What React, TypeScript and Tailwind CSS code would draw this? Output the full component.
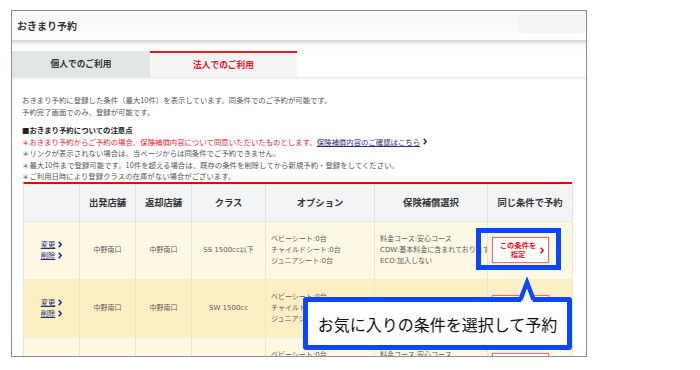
import React from "react";

const Chevron = ({ color = "#1f2a7a", w = 4, h = 7, sw = 1.4 }: { color?: string; w?: number; h?: number; sw?: number }) => (
  <svg width={w} height={h} viewBox={`0 0 ${w} ${h}`} className="inline-block">
    <polyline points={`0.7,0.7 ${w - 0.8},${h / 2} 0.7,${h - 0.7}`} fill="none" stroke={color} strokeWidth={sw} />
  </svg>
);

const LinkCell = () => (
  <div className="flex flex-col items-center justify-center text-[7.3px] leading-[11px] text-[#26307a]">
    <div className="flex items-center gap-[3px]">
      <span className="underline">変更</span>
      <Chevron />
    </div>
    <div className="flex items-center gap-[3px]">
      <span className="underline">削除</span>
      <Chevron />
    </div>
  </div>
);

const Button = () => (
  <div className="w-[57px] h-[26px] bg-white border border-[#ec6d6d] shadow-[0_0_0_1px_#fbe2e2] flex items-center pl-[3px] pr-[4px]">
    <div className="flex-1 text-center text-[7.3px] leading-[9.5px] font-bold text-[#e3141c] font-['Noto_Sans_CJK_JP',sans-serif]">
      <div>この条件を</div>
      <div>指定</div>
    </div>
    <Chevron color="#e3141c" w={4} h={7} sw={1.5} />
  </div>
);

type Row = { cls: string; bg: string; ins: string[] };

const rows: Row[] = [
  { cls: "SS 1500cc以下", bg: "bg-[#fdf8e4]", ins: ["料金コース:安心コース", "CDW:基本料金に含まれております", "ECO:加入しない"] },
  { cls: "SW 1500cc", bg: "bg-[#fcefc4]", ins: ["ECO:加入しない"] },
  { cls: "SS 1500cc以下", bg: "bg-[#fdf8e4]", ins: ["料金コース:安心コース", "CDW:基本料金に含まれております", "ECO:加入しない"] },
];

const cellB = "border-r border-[#ece6cf] flex items-center justify-center";

export default function App() {
  return (
    <div className="relative w-[700px] h-[370px] bg-white overflow-hidden font-['Noto_Sans_CJK_JP',sans-serif]">
      <div className="ml-[11px] mt-[10px] w-[576px] h-[347px] border border-[#8e8e8e] overflow-hidden flex flex-col">
        {/* header */}
        <div className="h-[29px] shrink-0 flex items-center justify-between pl-[5px] pr-[2px] bg-gradient-to-b from-[#f6f6f6] to-white">
          <span className="text-[10px] leading-[12px] font-bold text-[#333]">おきまり予約</span>
          <div className="w-[66px] h-[18px] mb-[4px] rounded-[4px] bg-[#f5f5f5]" />
        </div>
        <div className="h-[11px] shrink-0 bg-gradient-to-b from-[#d4d4d4] via-[#f7f7f7] via-40% to-white" />
        {/* tabs */}
        <div className="h-[26px] shrink-0 flex">
          <div className="w-[138px] bg-[#e0e6e4] flex items-center justify-center text-[8.7px] font-bold text-[#333]">
            個人でのご利用
          </div>
          <div className="w-[147px] bg-[#f5f5f7] border-t-2 border-[#e8141e] flex items-center justify-center text-[8.7px] font-bold text-[#e8141e]">
            法人でのご利用
          </div>
        </div>
        <div className="h-[3px] shrink-0 bg-gradient-to-b from-[#e6e6e6] to-white" />
        {/* content */}
        <div className="px-[10px] pt-[14px] text-[7.4px] leading-[11.7px] text-[#555] whitespace-nowrap">
          <div>おきまり予約に登録した条件（最大10件）を表示しています。同条件でのご予約が可能です。</div>
          <div>予約完了画面でのみ、登録が可能です。</div>
          <div className="mt-[7px] font-bold text-[#222] leading-[11.5px]">■おきまり予約についての注意点</div>
          <div className="leading-[11.5px]">
            <div className="text-[#e8202a] flex items-center">
              <span>＊おきまり予約からご予約の場合、保険補償内容について同意いただいたものとします。</span>
              <span className="underline text-[#26307a]">保険補償内容のご確認はこちら</span>
              <span className="ml-[3px] flex items-center"><Chevron /></span>
            </div>
            <div>＊リンクが表示されない場合は、当ページからは同条件でご予約できません。</div>
            <div>＊最大10件まで登録可能です。10件を超える場合は、既存の条件を削除してから新規予約・登録をしてください。</div>
            <div>＊ご利用日時により登録クラスの在庫がない場合がございます。</div>
          </div>

          {/* table */}
          <div className="ml-[1px] w-[549px] border-t-2 border-[#e60012] border-l border-l-[#e3e3e3]">
            <div className="grid grid-cols-[56px_56px_56px_74px_109px_113px_85px] h-[38px] bg-[#f3f4f6] border-b border-[#e6e6e6] text-[9.3px] font-bold text-[#333]">
              <div className="border-r border-[#e3e3e3]" />
              <div className="border-r border-[#e3e3e3] flex items-center justify-center">出発店舗</div>
              <div className="border-r border-[#e3e3e3] flex items-center justify-center">返却店舗</div>
              <div className="border-r border-[#e3e3e3] flex items-center justify-center">クラス</div>
              <div className="border-r border-[#e3e3e3] flex items-center justify-center">オプション</div>
              <div className="border-r border-[#e3e3e3] flex items-center justify-center">保険補償選択</div>
              <div className="border-r border-[#e3e3e3] flex items-center justify-center">同じ条件で予約</div>
            </div>
            {rows.map((r, i) => (
              <div
                key={i}
                className={`grid grid-cols-[56px_56px_56px_74px_109px_113px_85px] h-[58px] ${r.bg} border-b border-[#f3ecd3] text-[7px] leading-[11px] text-[#5a5a5a] font-['DejaVu_Sans','Noto_Sans_CJK_JP',sans-serif]`}
              >
                <div className={cellB}>
                  <LinkCell />
                </div>
                <div className={cellB}>中野南口</div>
                <div className={cellB}>中野南口</div>
                <div className={cellB}>{r.cls}</div>
                <div className="border-r border-[#ece6cf] flex flex-col justify-center pl-[5px]">
                  <div>ベビーシート:0台</div>
                  <div>チャイルドシート:0台</div>
                  <div>ジュニアシート:0台</div>
                </div>
                <div className="border-r border-[#ece6cf] flex flex-col justify-center pl-[5px] overflow-hidden">
                  {r.ins.map((t) => (
                    <div key={t}>{t}</div>
                  ))}
                </div>
                <div className="border-r border-[#ece6cf] flex items-center pl-[4px]">
                  <Button />
                </div>
              </div>
            ))}
          </div>
        </div>
      </div>

      {/* highlight box */}
      <div className="absolute left-[476px] top-[228px] w-[85px] h-[42px] border-[5px] border-[#0846ff]" />

      {/* callout */}
      <div className="absolute left-[303px] top-[297px] w-[269px] h-[53px] border-[5px] border-[#0846ff] rounded-[3px] bg-white flex items-center justify-center">
        <span className="text-[16px] leading-[20px] text-[#111]">お気に入りの条件を選択して予約</span>
      </div>
      <svg className="absolute left-[510px] top-[275px]" width="34" height="30" viewBox="0 0 34 30">
        <polygon points="11,27 17,9 23,27" fill="white" />
        <polyline points="10.5,24.5 17,7.5 23.5,24.5" fill="none" stroke="#0846ff" strokeWidth="4.5" strokeLinejoin="miter" strokeMiterlimit="6" />
        <polygon points="13,27 17,14 21,27" fill="white" />
      </svg>
    </div>
  );
}
